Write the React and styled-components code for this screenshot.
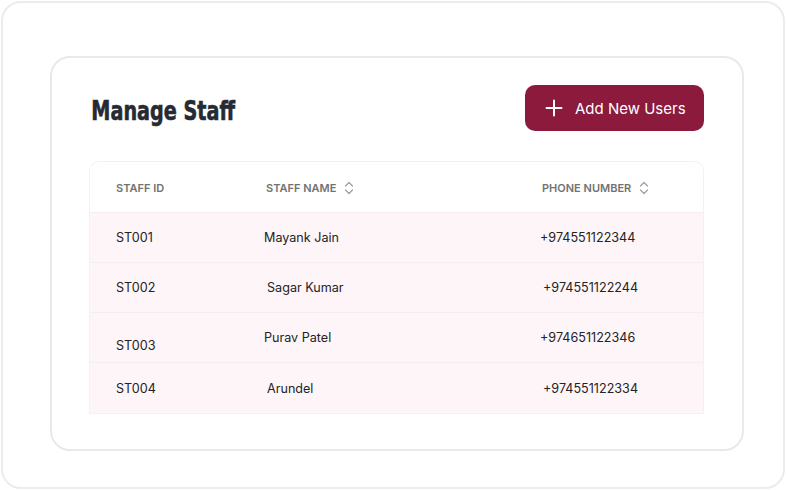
import React from "react";
import styled, { createGlobalStyle } from "styled-components";

const GlobalStyle = createGlobalStyle`
  html, body {
    margin: 0;
    padding: 0;
    background: #ffffff;
  }
  body {
    font-family: Inter, "Noto Sans", sans-serif;
    -webkit-font-smoothing: antialiased;
  }
  * { box-sizing: border-box; }
`;

const Frame = styled.div`
  width: 784px;
  height: 488px;
  margin: 1px;
  border: 2px solid #ececec;
  border-radius: 20px;
  padding: 53px 39px 36px 47px;
  display: flex;
`;

const Card = styled.section`
  flex: 1;
  border: 2px solid #e9e9e9;
  border-radius: 20px;
  padding: 27px 38px 35px 37px;
  display: flex;
  flex-direction: column;
  gap: 30px;
`;

const TopBar = styled.header`
  display: flex;
  align-items: center;
  justify-content: space-between;
  height: 46px;
`;

/* condensed heavy heading: the condensed face is narrowed further horizontally */
const Title = styled.h1`
  margin: 0;
  padding-left: 3px;
  font-family: "Liberation Sans Narrow", "DejaVu Sans Condensed", sans-serif;
  font-weight: 700;
  font-size: 27px;
  color: #262a33;
  -webkit-text-stroke: 0.6px #262a33;
  transform: scaleX(0.79);
  transform-origin: left center;
  white-space: nowrap;
  position: relative;
  top: 2px;
`;

const AddButton = styled.button`
  display: flex;
  align-items: center;
  gap: 12px;
  height: 46px;
  width: 179px;
  padding: 0 0 0 20px;
  border: none;
  border-radius: 10px;
  background: #8b1a3d;
  color: #ffffff;
  font-family: Inter, "Noto Sans", sans-serif;
  font-size: 15px;
  font-weight: 400;
  cursor: pointer;
`;

const Table = styled.div`
  border: 1px solid #eef3f7;
  border-radius: 10px 10px 0 0;
  overflow: hidden;
`;

const columns = "150px 276px 1fr";

const HeadRow = styled.div`
  display: grid;
  grid-template-columns: ${columns};
  align-items: center;
  height: 51px;
  padding: 1px 0 0 26px;
  background: #ffffff;
  border-bottom: 1px solid #f3eef0;
`;

const HeadCell = styled.div`
  display: flex;
  align-items: center;
  gap: 8px;
  font-size: 11px;
  font-weight: 600;
  color: #727272;
  text-transform: uppercase;
`;

const Row = styled.div`
  display: grid;
  grid-template-columns: ${columns};
  align-items: center;
  height: ${(p) => (p.$last ? 51 : 50)}px;
  padding-left: 26px;
  background: #fdf5f8;
  border-bottom: ${(p) => (p.$last ? "none" : "1px solid #f4eef1")};
`;

const Cell = styled.div`
  font-size: 12.6px;
  font-weight: 400;
  color: #232323;
  margin-left: ${(p) => p.$shift || 0}px;
  position: relative;
  top: ${(p) => p.$drop || 0}px;
`;

const SortIcon = () => (
  <svg width="10" height="14" viewBox="0 0 10 14" fill="none" stroke="#a0a0a0" strokeWidth="1.3" strokeLinecap="round" strokeLinejoin="round">
    <path d="M1.5 5 L5 1.5 L8.5 5" />
    <path d="M1.5 9 L5 12.5 L8.5 9" />
  </svg>
);

const PlusIcon = () => (
  <svg width="18" height="18" viewBox="0 0 18 18" fill="none" stroke="#ffffff" strokeWidth="2" strokeLinecap="round">
    <path d="M9 1.5 V16.5" />
    <path d="M1.5 9 H16.5" />
  </svg>
);

const staff = [
  { id: "ST001", name: "Mayank Jain", phone: "+974551122344", nameShift: -2, phoneShift: -2 },
  { id: "ST002", name: "Sagar Kumar", phone: "+974551122244", nameShift: 1, phoneShift: 1 },
  { id: "ST003", name: "Purav Patel", phone: "+974651122346", nameShift: -2, phoneShift: -2, idDrop: 8 },
  { id: "ST004", name: "Arundel", phone: "+974551122334", nameShift: 1, phoneShift: 1 },
];

export default function App() {
  return (
    <>
      <GlobalStyle />
      <Frame>
        <Card>
          <TopBar>
            <Title>Manage Staff</Title>
            <AddButton type="button">
              <PlusIcon />
              Add New Users
            </AddButton>
          </TopBar>
          <Table>
            <HeadRow>
              <HeadCell>Staff ID</HeadCell>
              <HeadCell>
                Staff Name <SortIcon />
              </HeadCell>
              <HeadCell>
                Phone Number <SortIcon />
              </HeadCell>
            </HeadRow>
            {staff.map((s, i) => (
              <Row key={s.id} $last={i === staff.length - 1}>
                <Cell $drop={s.idDrop}>{s.id}</Cell>
                <Cell $shift={s.nameShift}>{s.name}</Cell>
                <Cell $shift={s.phoneShift}>{s.phone}</Cell>
              </Row>
            ))}
          </Table>
        </Card>
      </Frame>
    </>
  );
}
